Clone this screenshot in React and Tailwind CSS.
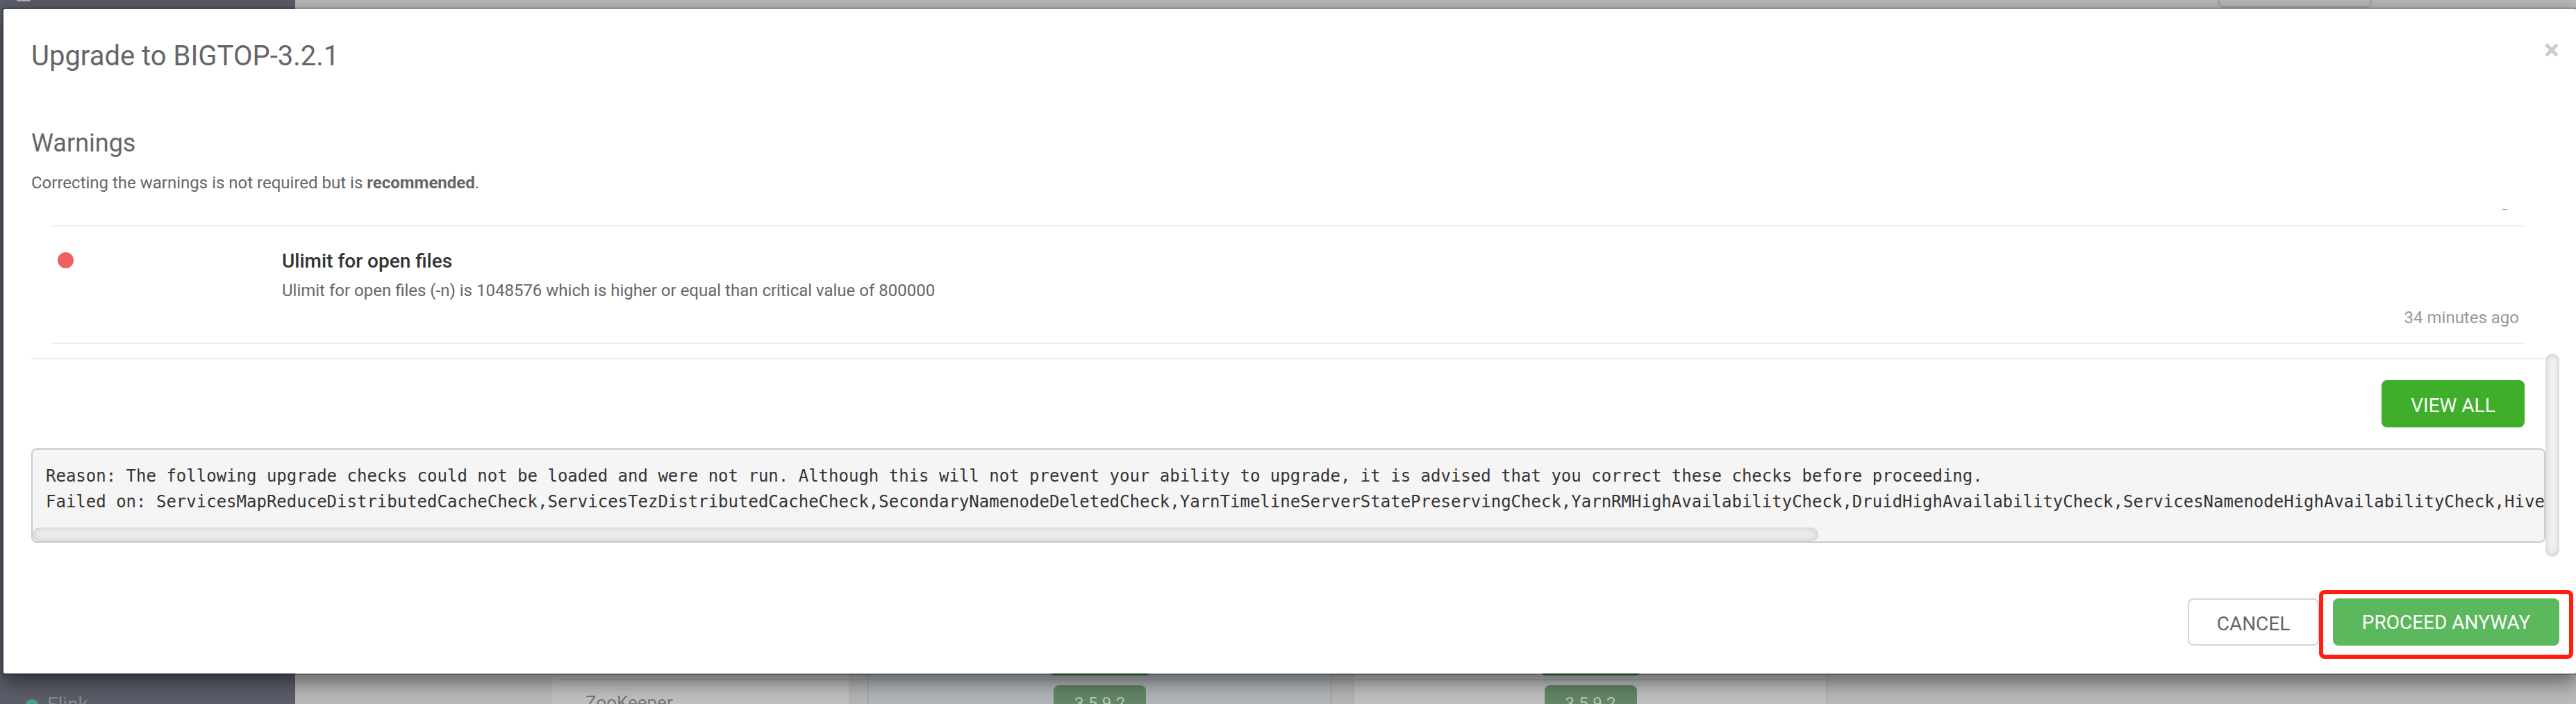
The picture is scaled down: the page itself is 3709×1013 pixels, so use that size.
const failedChecks = [
  'ServicesMapReduceDistributedCacheCheck',
  'ServicesTezDistributedCacheCheck',
  'SecondaryNamenodeDeletedCheck',
  'YarnTimelineServerStatePreservingCheck',
  'YarnRMHighAvailabilityCheck',
  'DruidHighAvailabilityCheck',
  'ServicesNamenodeHighAvailabilityCheck',
  'HiveMultipleMetastoreCheck',
];

function VersionColumn({ className }) {
  return (
    <div className={`flex flex-col items-center ${className}`}>
      <div className="mt-[840px] h-8 w-[145px] shrink-0 rounded-lg bg-[#4d8050]" />
      <div className="mt-[5px] h-[2px] w-full shrink-0 bg-[#a9b0b0]" />
      <div className="mt-[7px] h-[60px] w-[133px] shrink-0 rounded-lg bg-[#638766] pt-[10px] text-center text-[24px] leading-[32px] text-[#c0c4c0]">
        3.5.9.2
      </div>
    </div>
  );
}

function ColumnGap({ className }) {
  return (
    <div className={`bg-[#b5b5b5] ${className}`}>
      <div className="mt-[877px] h-[2px] bg-[#a9b0b0]" />
    </div>
  );
}

function Backdrop() {
  return (
    <div className="absolute inset-0 flex overflow-hidden bg-[#bababa]" aria-hidden="true">
      <div className="flex w-[425px] shrink-0 flex-col bg-[#5b5d69]">
        <div className="ml-6 h-[2px] w-5 shrink-0 rounded-b-full bg-[#b5b5b5]" />
        <div className="mt-[994px] flex shrink-0 items-center gap-3 pl-9">
          <span className="mt-1 size-5 rounded-full bg-[#4f9f7b]" />
          <span className="text-[28px] leading-[36px] text-[#8b8b8b]">Flink</span>
        </div>
      </div>
      <div className="ml-[370px] mt-[100px] flex shrink-0">
        <div className="w-[427px] bg-[#c1c1c1] pl-[10px]">
          <div className="mt-[877px] h-[2px] bg-[#a9b0b0]" />
          <div className="mt-[14px] pl-[38px] text-[26px] leading-[36px] text-[#777]">ZooKeeper</div>
        </div>
        <ColumnGap className="w-[27px]" />
        <VersionColumn className="w-[669px] border-x-2 border-[#a2a9ac] bg-[#b1b6b9]" />
        <ColumnGap className="w-[30px]" />
        <VersionColumn className="w-[684px] border-x-2 border-[#b0b0b0] bg-[#c1c1c1]" />
      </div>
      <div className="ml-[562px] h-[11px] w-[221px] shrink-0 rounded-b-lg border-2 border-t-0 border-[#a2a2a2]" />
    </div>
  );
}

function Header() {
  return (
    <header className="flex items-start justify-between pl-10 pr-[25px] pt-10">
      <h1 className="text-[40px] leading-[56px]">Upgrade to BIGTOP-3.2.1</h1>
      <button type="button" aria-label="Close" className="mt-[9px] text-[#ccc]">
        <svg viewBox="0 0 20 20" className="size-5" stroke="currentColor" strokeWidth="4.8">
          <path d="M2 2 18 18M18 2 2 18" />
        </svg>
      </button>
    </header>
  );
}

function WarningRow() {
  return (
    <article className="mx-[30px] flex border-y-2 border-[#eee] px-2 pb-[17px] pt-[30px]">
      <div className="w-[323px] shrink-0 pt-[7px]">
        <span className="block size-[23px] rounded-full bg-[#ef6162]" />
      </div>
      <div className="flex grow flex-col">
        <h3 className="text-[28px] font-medium leading-[40px] text-[#333]">Ulimit for open files</h3>
        <p className="mt-[3px] text-[24px] leading-[38px]">
          Ulimit for open files (-n) is 1048576 which is higher or equal than critical value of 800000
        </p>
        <time className="mt-px self-end text-[24px] leading-[38px] text-[#999]">34 minutes ago</time>
      </div>
    </article>
  );
}

function FailureLog() {
  return (
    <div className="overflow-hidden rounded-lg border-2 border-[#ccc] bg-[#f5f5f5] pt-5">
      <pre className="overflow-hidden pl-[19px] font-['DejaVu_Sans_Mono',monospace] text-[24px] leading-[37px] text-[#333]">
        {'Reason: The following upgrade checks could not be loaded and were not run. Although this will not prevent your ability to upgrade, it is advised that you correct these checks before proceeding.\n'}
        {'Failed on: ' + failedChecks.join(',')}
      </pre>
      <div className="mt-[18px] h-5 w-[71.1%] rounded-[10px] bg-[#ebebeb] shadow-[inset_0_0_10px_rgba(0,0,0,0.15)]" />
    </div>
  );
}

export default function App() {
  return (
    <div className="relative min-h-screen overflow-hidden font-[Roboto,sans-serif] text-[#666]">
      <Backdrop />
      <div
        role="dialog"
        aria-label="Upgrade to BIGTOP-3.2.1"
        className="relative -mr-[2px] ml-[3px] mt-[11px] rounded border-2 border-black/20 bg-white bg-clip-padding shadow-[0_10px_30px_rgba(0,0,0,0.5)]"
      >
        <Header />
        <div className="mt-[76px] flex pl-10 pr-6">
          <div className="min-w-0 grow">
            <h2 className="text-[36px] leading-[42px]">Warnings</h2>
            <p className="mt-[18px] text-[24px] leading-[37px]">
              Correcting the warnings is not required but is <strong>recommended</strong>.
            </p>
            <div className="mb-[22px] ml-auto mr-[55px] mt-[19px] h-px w-[7px] bg-[#999]" />
            <WarningRow />
            <div className="mt-5 flex justify-end border-t-2 border-[#eee] py-[30px] pr-[30px]">
              <button type="button" className="h-[68px] w-[206px] rounded-lg bg-[#3fae2a] pt-[6px] text-[28px] text-white">
                VIEW ALL
              </button>
            </div>
            <FailureLog />
            <div className="h-5" />
          </div>
          <div className="flex w-5 shrink-0 flex-col justify-end">
            <div className="h-[292px] rounded-[10px] bg-[#f1f1f1] shadow-[inset_0_0_10px_rgba(0,0,0,0.18)]" />
          </div>
        </div>
        <footer className="flex justify-end pb-[21px] pr-[4px] pt-12">
          <button
            type="button"
            className="mt-3 h-[68px] w-[189px] rounded-lg border-2 border-[#cfd3d7] bg-white pt-[6px] text-[28px]"
          >
            CANCEL
          </button>
          <div className="rounded-lg border-[6px] border-[#ff1e0f] px-[14px] pb-[13px] pt-[6px]">
            <button type="button" className="h-[68px] w-[326px] rounded-lg bg-[#5cb85c] pt-[2px] text-[28px] text-white">
              PROCEED ANYWAY
            </button>
          </div>
        </footer>
      </div>
    </div>
  );
}
